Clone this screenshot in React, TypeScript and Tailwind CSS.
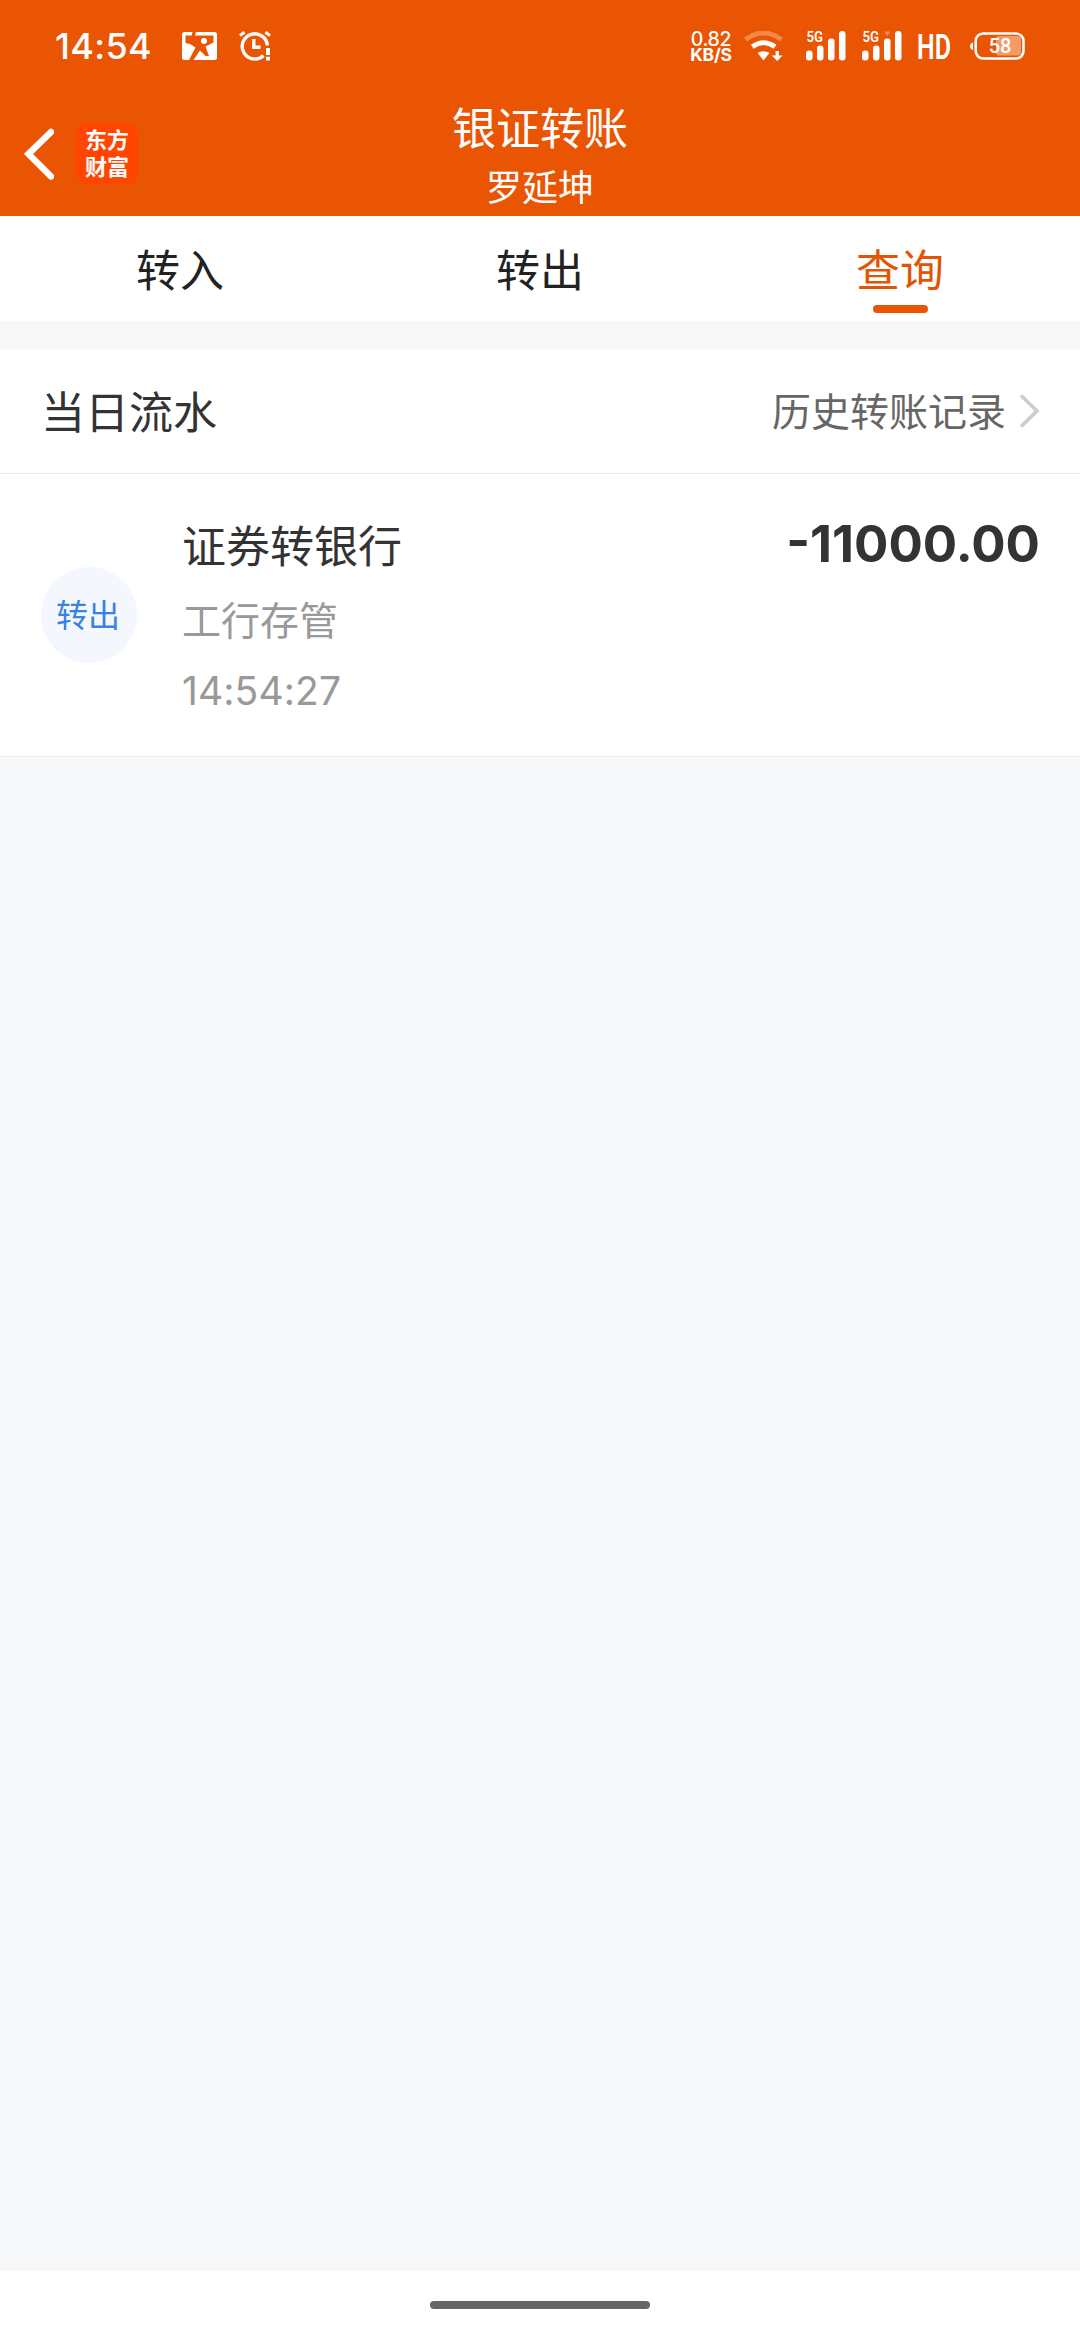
type Transfer = {
  id: number;
  direction: string;
  title: string;
  bank: string;
  time: string;
  amount: string;
};

const tabs = ["转入", "转出", "查询"];

const transfers: Transfer[] = [
  {
    id: 1,
    direction: "转出",
    title: "证券转银行",
    bank: "工行存管",
    time: "14:54:27",
    amount: "-11000.00",
  },
];

function PictureIcon() {
  return (
    <svg width="35" height="28" viewBox="0 0 35 28">
      <rect width="35" height="28" rx="2.5" fill="#fff" />
      <path
        d="M3.5 3.5H9.7L10.5 0H14L13 3.5H31.5V10.5L23.5 14.5L27 24H23.5L18 18.5L11.5 28H7L13.5 15.5L8.5 12.3L3.5 11Z"
        fill="#ea5504"
      />
      <circle cx="22" cy="9" r="3" fill="#fff" />
    </svg>
  );
}

function AlarmIcon() {
  return (
    <svg width="32" height="30" viewBox="0 0 32 30" fill="none" stroke="#fff">
      <path d="M24.5 24.6A12.6 12.6 0 1 1 28.4 14.5" strokeWidth="3.4" />
      <path d="M1 4.6L5.5 1.2M26.5 1.2L31 4.6" strokeWidth="3" />
      <path d="M14.8 8V16.2H21.5" strokeWidth="3.4" />
      <path d="M29 17V24M29 25.8V29.5" strokeWidth="4" />
    </svg>
  );
}

function WifiIcon() {
  return (
    <svg width="40" height="30" viewBox="0 0 40 30" fill="none">
      <path d="M1.5 8.5Q19.5 -4.5 37.5 8.5" stroke="#f5874a" strokeWidth="5" />
      <path d="M8.3 15.8Q19.5 7.5 31 15.8" stroke="#fff" strokeWidth="4.8" />
      <path d="M13.5 21.8Q19.5 18.5 25.5 21.8L19.5 29.5Z" fill="#fff" />
      <path d="M31.6 20H34.8V24.5H38.5L33.2 30L27.8 24.5H31.6Z" fill="#fff" />
    </svg>
  );
}

function SignalIcon({ marker = false }: { marker?: boolean }) {
  return (
    <svg
      width="40"
      height="30"
      viewBox="0 0 40 30"
      fill="#fff"
      className="overflow-visible"
    >
      <text
        x="0.5"
        y="11"
        fontSize="15"
        fontWeight="600"
        textLength="16.5"
        lengthAdjust="spacingAndGlyphs"
        className="font-['Roboto',sans-serif]"
      >
        5G
      </text>
      {marker && <path d="M22 0.5H28.5L25.2 5Z" fill="#f5874a" />}
      <rect x="0" y="19.5" width="6.5" height="10" rx="3" />
      <rect x="11" y="14.5" width="6.5" height="15" rx="3" />
      <rect x="22" y="7.5" width="6.5" height="22" rx="3" />
      <rect x="33" y="0" width="6.5" height="29.5" rx="3" />
    </svg>
  );
}

function BatteryIcon() {
  return (
    <svg width="55" height="28" viewBox="0 0 55 28" fill="none">
      <path d="M3 10.5V18C1 17.5 0 16 0 14.2C0 12.5 1 11 3 10.5Z" fill="#fff" />
      <rect x="26" y="4" width="25" height="19.5" rx="3" fill="#f29a68" />
      <rect
        x="5.7"
        y="1.5"
        width="47.8"
        height="25"
        rx="7.5"
        stroke="#fff"
        strokeWidth="2.6"
      />
      <text
        x="30"
        y="20.5"
        fontSize="20"
        fontWeight="500"
        textAnchor="middle"
        fill="#fff"
        className="font-['Roboto',sans-serif]"
      >
        58
      </text>
    </svg>
  );
}

function StatusBar() {
  return (
    <div className="flex h-[92px] items-center pl-[55px] pr-[55px] font-['Inter',sans-serif] text-white">
      <span className="w-[127px] text-[36px] font-medium leading-none tracking-[0.3px]">
        14:54
      </span>
      <PictureIcon />
      <div className="ml-[22px]">
        <AlarmIcon />
      </div>

      <div className="ml-auto flex items-center">
        <div className="w-[42px] pt-px text-center leading-[16px]">
          <p className="text-[19.5px] font-medium tracking-[-0.3px]">0.82</p>
          <p className="text-[17.5px] font-bold tracking-[-0.2px]">KB/S</p>
        </div>
        <div className="ml-[12px]">
          <WifiIcon />
        </div>
        <div className="ml-[22px] flex gap-4">
          <SignalIcon />
          <SignalIcon marker />
        </div>
        <svg
          className="ml-[15px] overflow-visible"
          width="34"
          height="28"
          viewBox="0 0 34 28"
        >
          <text
            x="0"
            y="26.5"
            fontSize="35.5"
            fontWeight="600"
            textLength="34"
            lengthAdjust="spacingAndGlyphs"
            fill="#fff"
            className="font-['Roboto',sans-serif]"
          >
            HD
          </text>
        </svg>
        <div className="ml-[19px]">
          <BatteryIcon />
        </div>
      </div>
    </div>
  );
}

function Header() {
  return (
    <header className="h-[216px] bg-[#ea5504] text-white">
      <StatusBar />
      <div className="grid h-[124px] grid-cols-3 items-center">
        <div className="flex items-center pl-6">
          <svg width="30" height="52" viewBox="0 0 30 52" fill="none">
            <path
              d="M27 4L4.5 26L27 48.5"
              stroke="#fff"
              strokeWidth="6.5"
              strokeLinecap="round"
            />
          </svg>
          <div className="ml-[22px] flex size-[62px] flex-col items-center justify-center rounded-[13px] bg-[#ff4500] text-[22px] font-bold leading-[27px]">
            <span>东方</span>
            <span>财富</span>
          </div>
        </div>
        <div className="pt-[7px] text-center">
          <h1 className="text-[44px] leading-[61px]">银证转账</h1>
          <p className="text-[36px] leading-[56px]">罗延坤</p>
        </div>
      </div>
    </header>
  );
}

export default function App() {
  const activeTab = "查询";

  return (
    <div className="flex h-[2340px] w-[1080px] flex-col bg-[#f6f8fa] font-['Inter','Noto_Sans_CJK_SC',sans-serif] text-[#333]">
      <Header />

      <nav className="grid h-[105px] grid-cols-3 bg-white">
        {tabs.map((tab) => (
          <button
            key={tab}
            type="button"
            className={
              tab === activeTab
                ? "flex flex-col items-center pt-[23px] text-[44px] leading-[64px] text-[#e35505]"
                : "flex flex-col items-center pt-[23px] text-[44px] leading-[64px] text-[#222]"
            }
          >
            {tab}
            {tab === activeTab && (
              <span className="mt-[2px] h-2 w-[55px] rounded-full bg-[#ea5504]" />
            )}
          </button>
        ))}
      </nav>

      <section className="mt-7 border-b border-[#ebebeb] bg-white">
        <div className="flex h-[125px] items-center justify-between border-b border-[#ebebeb] pl-[41px] pr-[40px]">
          <h2 className="pt-[3px] text-[44px] leading-none">当日流水</h2>
          <button
            type="button"
            className="flex items-center text-[39px] leading-none text-[#666]"
          >
            <span className="pt-px">历史转账记录</span>
            <svg
              className="ml-[13px]"
              width="21"
              height="34"
              viewBox="0 0 21 34"
              fill="none"
            >
              <path d="M2 1.5L18 17L2 32.5" stroke="#ccc" strokeWidth="3.6" />
            </svg>
          </button>
        </div>

        {transfers.map((item) => (
          <div key={item.id} className="flex h-[282px] pl-[41px] pr-[40px]">
            <div className="mt-[93px] flex size-24 items-center justify-center rounded-full bg-[#f4f8fe] pr-[2px] pt-[2px] text-[32px] text-[#3a82e0]">
              {item.direction}
            </div>
            <div className="ml-[45px] mt-[41px] flex-1">
              <p className="text-[44px] leading-[64px]">{item.title}</p>
              <p className="mt-[14px] text-[39px] leading-[56px] text-[#999]">
                {item.bank}
              </p>
              <p className="mt-[14px] text-[39px] leading-[56px] tracking-[0.1px] text-[#999]">
                {item.time}
              </p>
            </div>
            <p className="mt-[40px] text-[51px] font-bold leading-[60px]">
              {item.amount}
            </p>
          </div>
        ))}
      </section>

      <footer className="mt-auto flex h-[69px] justify-center bg-white pt-[30px]">
        <div className="h-2 w-[220px] rounded-full bg-[#666]" />
      </footer>
    </div>
  );
}
